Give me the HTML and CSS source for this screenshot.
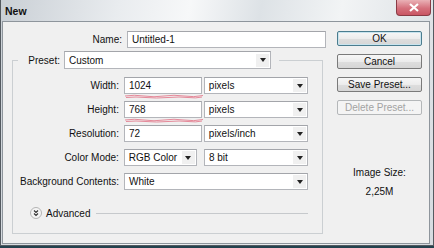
FILE: index.html
```html
<!DOCTYPE html>
<html lang="en">
<head>
  <meta charset="UTF-8" />
  <title>New</title>
  <link rel="stylesheet" href="styles.css">
</head>
<body>
  <div class="window">
    <div class="titlebar">
      <span class="title">New</span>
      <div class="close">
        <svg width="12" height="9" viewBox="0 0 12 9"><path d="M2 1 L10 8 M10 1 L2 8" stroke="#fff" stroke-width="2.2"/></svg>
      </div>
    </div>

    <div class="client">
      <div class="main">
        <div class="row name-row">
          <span class="lbl name-lbl">Name:</span>
          <div class="field name-field">Untitled-1</div>
        </div>

        <fieldset class="group">
          <legend class="preset">
            <span class="preset-lbl">Preset:</span>
            <div class="combo preset-combo"><span class="val">Custom</span><i class="arrow"></i></div>
          </legend>

          <div class="rows">
            <div class="row">
              <span class="lbl">Width:</span>
              <div class="field num wavy">1024
                <svg class="scribble" width="80" height="5" viewBox="0 0 80 5"><path d="M1 2 Q10 0.5 20 2 T40 2 T60 2 T79 1.5 M2 3.5 Q12 2.5 22 3.5 T44 3.5 T64 3.5 T78 3" stroke="#e58a9a" stroke-width="1" fill="none"/></svg>
              </div>
              <div class="combo unit"><span class="val">pixels</span><i class="arrow"></i></div>
            </div>
            <div class="row">
              <span class="lbl">Height:</span>
              <div class="field num wavy">768
                <svg class="scribble" width="80" height="5" viewBox="0 0 80 5"><path d="M1 2 Q10 0.5 20 2 T40 2 T60 2 T79 1.5 M2 3.5 Q12 2.5 22 3.5 T44 3.5 T64 3.5 T78 3" stroke="#e58a9a" stroke-width="1" fill="none"/></svg>
              </div>
              <div class="combo unit"><span class="val">pixels</span><i class="arrow"></i></div>
            </div>
            <div class="row">
              <span class="lbl">Resolution:</span>
              <div class="field num">72</div>
              <div class="combo unit"><span class="val">pixels/inch</span><i class="arrow"></i></div>
            </div>
            <div class="row">
              <span class="lbl">Color Mode:</span>
              <div class="combo mode"><span class="val">RGB Color</span><i class="arrow"></i></div>
              <div class="combo unit bits"><span class="val">8 bit</span><i class="arrow"></i></div>
            </div>
            <div class="row">
              <span class="lbl">Background Contents:</span>
              <div class="combo bg"><span class="val">White</span><i class="arrow"></i></div>
            </div>
          </div>

          <div class="advanced">
            <span class="chev">
              <svg width="12" height="12" viewBox="0 0 12 12"><circle cx="6" cy="6" r="5.5" fill="#f4f4f4" stroke="#b4b4b4"/><path d="M4 3.5 L6 5.5 L8 3.5 M4 6.5 L6 8.5 L8 6.5" stroke="#333" stroke-width="1.1" fill="none"/></svg>
            </span>
            <span class="adv-text">Advanced</span>
            <span class="adv-line"></span>
          </div>
        </fieldset>
      </div>

      <div class="side">
        <div class="btn ok">OK</div>
        <div class="btn">Cancel</div>
        <div class="btn">Save Preset...</div>
        <div class="btn disabled">Delete Preset...</div>
        <div class="size-lbl">Image Size:</div>
        <div class="size-val">2,25M</div>
      </div>
    </div>
  </div>
</body>
</html>
```

FILE: styles.css
```css
html, body {
  margin: 0;
  padding: 0;
  background: #24424e;
  font-family: "Liberation Sans", Arial, sans-serif;
  font-size: 10px;
  color: #111;
}

.window {
  height: 246px;
  box-sizing: border-box;
  border: 1px solid #545a60;
  border-top: none;
  background: linear-gradient(100deg, #c9cfd5 0%, #e9ecef 25%, #f7f8f9 40%, #dde2e6 55%, #f2f4f5 72%, #d6dbe0 100%);
  display: flex;
  flex-direction: column;
}

.titlebar {
  height: 21px;
  display: flex;
  align-items: flex-start;
}

.title {
  font-weight: bold;
  font-size: 10.5px;
  padding: 5px 0 0 4px;
  line-height: 12px;
  color: #111;
}

.close {
  margin-left: auto;
  width: 35px;
  height: 16px;
  box-sizing: border-box;
  border: 1px solid #8a3b45;
  border-top: none;
  border-radius: 0 0 4px 4px;
  background: linear-gradient(#eab1b6, #d5707c 55%, #c95563);
  display: flex;
  align-items: center;
  justify-content: center;
  margin-right: 2px;
}

.client {
  flex: 1;
  margin: 0 3px 1px 1px;
  border: 1px solid #8e959c;
  background: #f0f0f0;
  display: flex;
  padding: 9px 0 0 9px;
}

.main {
  width: 314px;
}

.row {
  display: flex;
  align-items: center;
  height: 17px;
}

.lbl {
  width: 109px;
  margin-right: 5px;
  text-align: right;
  white-space: nowrap;
}

.name-lbl {
  width: 110px;
}

.field, .combo {
  height: 17px;
  box-sizing: border-box;
  border: 1px solid #b3b5ba;
  border-top-color: #a3a5aa;
  background: #fff;
  line-height: 15px;
  padding-left: 4px;
  white-space: nowrap;
}

.name-field {
  width: 199px;
}

.combo {
  display: flex;
  align-items: center;
  padding-right: 1px;
}

.combo .val {
  flex: 1;
}

.arrow {
  width: 13px;
  height: 13px;
  background: #f0f0f0;
  display: flex;
  align-items: center;
  justify-content: center;
}

.arrow::after {
  content: "";
  border-top: 4px solid #222;
  border-left: 3px solid transparent;
  border-right: 3px solid transparent;
}

.group {
  width: 311px;
  box-sizing: border-box;
  margin: 3px 0 0;
  padding: 0 14px 14px 0;
  border: 1px solid #cbcfd2;
  min-inline-size: 0;
}

.preset {
  margin-left: 5px;
  padding: 0 8px 0 0;
  display: flex;
  align-items: center;
}

.preset-lbl {
  width: 46px;
  padding-right: 4px;
  box-sizing: border-box;
  text-align: right;
}

.preset-combo {
  width: 207px;
  height: 18px;
}

.rows {
  display: flex;
  flex-direction: column;
  gap: 7px;
  padding-top: 8px;
}

.num {
  width: 80px;
  margin-right: 2px;
  position: relative;
}

.scribble {
  position: absolute;
  left: -1px;
  top: 16px;
}

.unit {
  width: 107px;
}

.mode {
  width: 75px;
  margin-right: 7px;
}

.bg {
  width: 189px;
}

.advanced {
  display: flex;
  align-items: center;
  height: 12px;
  margin-top: 17px;
  padding-left: 17px;
}

.chev {
  display: flex;
  width: 12px;
  height: 12px;
}

.adv-text {
  margin-left: 4px;
}

.adv-line {
  flex: 1;
  height: 1px;
  background: #c6c9cc;
  margin-left: 6px;
}

.side {
  width: 85px;
  margin-left: 11px;
  display: flex;
  flex-direction: column;
  gap: 8px;
}

.btn {
  height: 15px;
  box-sizing: border-box;
  border: 1px solid #7a7a7a;
  border-radius: 2px;
  background: linear-gradient(#f7f7f7, #ececec 50%, #dedede 51%, #d6d6d6);
  text-align: center;
  line-height: 13px;
}

.ok {
  border-color: #4b7d8f;
  box-shadow: inset 0 0 0 1px #c9e4ee;
}

.disabled {
  color: #a3a3a3;
  border-color: #b4b7b9;
  background: #f4f4f4;
}

.size-lbl {
  margin-top: 43px;
  text-align: center;
  line-height: 13px;
}

.size-val {
  margin-top: -2px;
  text-align: center;
  line-height: 13px;
}
```
